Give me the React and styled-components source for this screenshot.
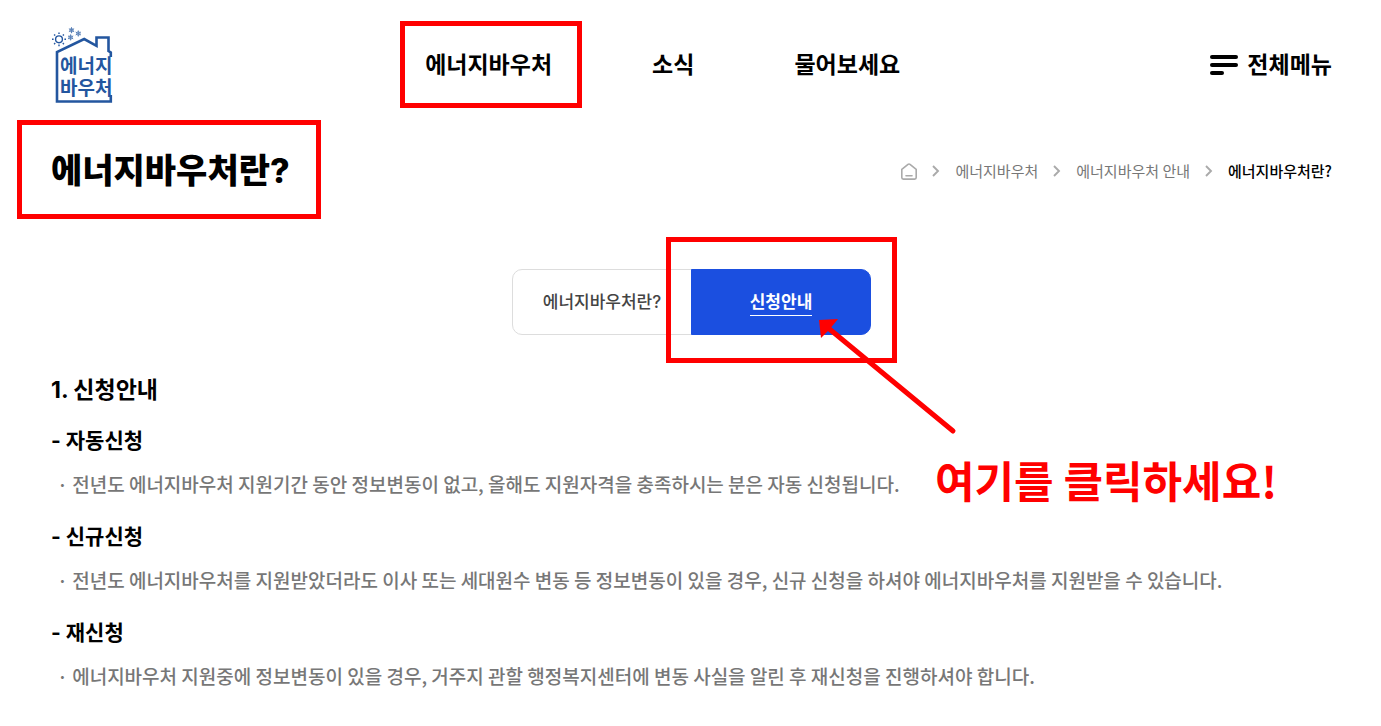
import React from "react";
import styled, { createGlobalStyle } from "styled-components";

const RED = "#ff0000";
const BLUE = "#1b4fe0";
const DISPLAY_FONT = `Inter, "Noto Sans CJK KR", sans-serif`;

const GlobalStyle = createGlobalStyle`
  *, *::before, *::after { box-sizing: border-box; }
  body {
    margin: 0;
    background: #fff;
    color: #000;
    font-family: "Noto Sans CJK KR", "Noto Sans", sans-serif;
  }
  h1, h2, h3, p, ul, ol { margin: 0; padding: 0; }
  ul, ol { list-style: none; }
  a { color: inherit; text-decoration: none; }
`;

const Page = styled.div`
  padding: 0 49px 32px 51px;
  overflow-x: hidden;
`;

const Header = styled.header`
  display: flex;
  align-items: center;
  justify-content: space-between;
  height: 130px;
`;

const LogoLink = styled.a`
  display: block;
  width: 64px;
  height: 80px;
`;

const NavList = styled.ul`
  display: flex;
  gap: 100px;
`;

const NavItem = styled.li`
  position: relative;
  font-family: ${DISPLAY_FONT};
  font-size: 23px;
  font-weight: 700;
  line-height: 36px;
`;

const Highlight = styled.span`
  position: absolute;
  inset: ${(p) => p.$inset};
  border: 5px solid ${RED};
  pointer-events: none;
`;

const MenuButton = styled.button`
  display: flex;
  align-items: center;
  gap: 9px;
  padding: 0;
  border: 0;
  background: none;
  color: inherit;
  font-family: ${DISPLAY_FONT};
  font-size: 23px;
  font-weight: 700;
  line-height: 36px;
  cursor: pointer;
`;

const TitleRow = styled.div`
  display: flex;
  align-items: center;
  justify-content: space-between;
  height: 82px;
`;

const Title = styled.h1`
  position: relative;
  font-family: ${DISPLAY_FONT};
  font-size: 34px;
  font-weight: 800;
  line-height: 50px;
`;

const Crumbs = styled.ol`
  display: flex;
  align-items: center;
  gap: 15px;
  font-size: 15px;
  line-height: 24px;
  color: #777;
`;

const Crumb = styled.li`
  display: flex;
  align-items: center;
  gap: 15px;
  color: ${(p) => (p.$current ? "#000" : "inherit")};
  font-weight: ${(p) => (p.$current ? 500 : 400)};

  a, svg { display: block; }
`;

const Tabs = styled.ul`
  display: flex;
  justify-content: center;
  margin-top: 57px;
`;

const Tab = styled.li`
  position: relative;
  width: 180px;
  height: 66px;

  & + & { margin-left: -1px; }
`;

const TabLink = styled.a`
  display: flex;
  align-items: center;
  justify-content: center;
  height: 100%;
  border: 1px solid ${(p) => (p.$active ? BLUE : "#ddd")};
  border-radius: ${(p) => (p.$active ? "0 10px 10px 0" : "10px 0 0 10px")};
  background: ${(p) => (p.$active ? BLUE : "#fff")};
  color: ${(p) => (p.$active ? "#fff" : "#444")};
  font-family: ${DISPLAY_FONT};
  font-size: 17px;
  font-weight: ${(p) => (p.$active ? 700 : 500)};
  line-height: 26px;

  span { border-bottom: 1px solid ${(p) => (p.$active ? "#fff" : "transparent")}; }
`;

const Arrow = styled.svg`
  position: absolute;
  left: 128px;
  top: 50px;
  pointer-events: none;
`;

const Callout = styled.strong`
  position: absolute;
  left: 244px;
  top: 178px;
  color: ${RED};
  font-size: 43px;
  font-weight: 700;
  line-height: 64px;
  white-space: nowrap;
`;

const Section = styled.section`
  margin-top: 35px;
`;

const SectionTitle = styled.h2`
  margin-bottom: 13px;
  font-family: ${DISPLAY_FONT};
  font-size: 23px;
  font-weight: 700;
  line-height: 40px;
`;

const Block = styled.div`
  & + & { margin-top: 18px; }
`;

const BlockTitle = styled.h3`
  font-family: ${DISPLAY_FONT};
  font-size: 21px;
  font-weight: 700;
  line-height: 36px;
`;

const BlockText = styled.p`
  margin-top: 8px;
  padding-left: 6px;
  color: #777;
  font-size: 19px;
  font-weight: 500;
  line-height: 34px;
`;

const LogoText = styled.text`
  fill: #23569f;
  font-family: ${DISPLAY_FONT};
  font-size: 19px;
  font-weight: 700;
`;

function Flake({ x, y }) {
  return (
    <g transform={`translate(${x} ${y})`} stroke="#5b82b8" strokeWidth="1">
      <path d="M0-3V3M-2.6-1.5L2.6 1.5M-2.6 1.5L2.6-1.5" />
      <circle r="1.8" fill="none" strokeWidth=".7" />
    </g>
  );
}

function Logo() {
  return (
    <svg width="64" height="80" viewBox="51 25 64 80" fill="none" aria-hidden="true">
      <path
        d="M110.8 57V52.5L108.5 51V37.5H96.5V45.8L84.2 39L57 52V101.5H110.8V95"
        stroke="#23569f"
        strokeWidth="2.6"
      />
      <circle cx="59" cy="39.3" r="3.4" stroke="#23569f" strokeWidth="1.4" />
      <path
        d="M59 32.5V34M59 44.6V46.2M52 39.3H53.6M64.4 39.3H66M54.1 34.4L55.2 35.5M62.8 43.1L63.9 44.2M54.1 44.2L55.2 43.1M62.8 35.5L63.9 34.4"
        stroke="#23569f"
        strokeWidth="1.4"
      />
      <Flake x={71.5} y={30.2} />
      <Flake x={78.3} y={33.5} />
      <Flake x={70.6} y={37.4} />
      <LogoText x="60" y="73">에너지</LogoText>
      <LogoText x="60" y="95">바우처</LogoText>
    </svg>
  );
}

function MenuIcon() {
  return (
    <svg width="28" height="20" viewBox="0 0 28 20" aria-hidden="true">
      <rect width="28" height="4" rx="2" />
      <rect y="8" width="28" height="4" rx="2" />
      <rect y="16" width="14" height="4" rx="2" />
    </svg>
  );
}

function HomeIcon() {
  return (
    <svg width="16" height="18" viewBox="1 0 16 18" fill="none" stroke="#aaa" strokeWidth="1.6" strokeLinejoin="round" strokeLinecap="round">
      <path d="M1.8 7.4L8 2.4Q9 1.7 10 2.4L16.2 7.4V15.6Q16.2 17.1 14.7 17.1H3.3Q1.8 17.1 1.8 15.6Z" />
      <path d="M6 13.8H12" />
    </svg>
  );
}

function Chevron() {
  return (
    <svg width="8" height="14" viewBox="1 0 8 14" fill="none" stroke="#aaa" strokeWidth="1.9" aria-hidden="true">
      <path d="M2 2L7 7L2 12" />
    </svg>
  );
}

const BLOCKS = [
  ["- 자동신청", "· 전년도 에너지바우처 지원기간 동안 정보변동이 없고, 올해도 지원자격을 충족하시는 분은 자동 신청됩니다."],
  ["- 신규신청", "· 전년도 에너지바우처를 지원받았더라도 이사 또는 세대원수 변동 등 정보변동이 있을 경우, 신규 신청을 하셔야 에너지바우처를 지원받을 수 있습니다."],
  ["- 재신청", "· 에너지바우처 지원중에 정보변동이 있을 경우, 거주지 관할 행정복지센터에 변동 사실을 알린 후 재신청을 진행하셔야 합니다."],
];

export default function App() {
  return (
    <Page>
      <GlobalStyle />
      <Header>
        <LogoLink href="#home" aria-label="에너지바우처">
          <Logo />
        </LogoLink>
        <nav>
          <NavList>
            <NavItem>
              <a href="#voucher">에너지바우처</a>
              <Highlight $inset="-26px -30px -25px -25px" />
            </NavItem>
            <NavItem><a href="#news">소식</a></NavItem>
            <NavItem><a href="#ask">물어보세요</a></NavItem>
          </NavList>
        </nav>
        <MenuButton type="button">
          <MenuIcon />
          전체메뉴
        </MenuButton>
      </Header>
      <main>
        <TitleRow>
          <Title>
            에너지바우처란?
            <Highlight $inset="-26px -31px -23px -34px" />
          </Title>
          <nav aria-label="breadcrumb">
            <Crumbs>
              <Crumb><a href="#home" aria-label="홈"><HomeIcon /></a></Crumb>
              <Crumb><Chevron /><a href="#voucher">에너지바우처</a></Crumb>
              <Crumb><Chevron /><a href="#guide">에너지바우처 안내</a></Crumb>
              <Crumb $current><Chevron /><a href="#about">에너지바우처란?</a></Crumb>
            </Crumbs>
          </nav>
        </TitleRow>
        <Tabs>
          <Tab>
            <TabLink href="#about"><span>에너지바우처란?</span></TabLink>
          </Tab>
          <Tab>
            <TabLink href="#apply" $active><span>신청안내</span></TabLink>
            <Highlight $inset="-32px -26px -28px -25px" />
            <Arrow width="140" height="116" viewBox="0 0 140 116" aria-hidden="true">
              <path d="M8 8L134 112" stroke={RED} strokeWidth="5" strokeLinecap="round" />
              <path d="M0 1L19 0L10 11L2 19Z" fill={RED} />
            </Arrow>
            <Callout>여기를 클릭하세요!</Callout>
          </Tab>
        </Tabs>
        <Section>
          <SectionTitle>1. 신청안내</SectionTitle>
          {BLOCKS.map(([title, text]) => (
            <Block key={title}>
              <BlockTitle>{title}</BlockTitle>
              <BlockText>{text}</BlockText>
            </Block>
          ))}
        </Section>
      </main>
    </Page>
  );
}
